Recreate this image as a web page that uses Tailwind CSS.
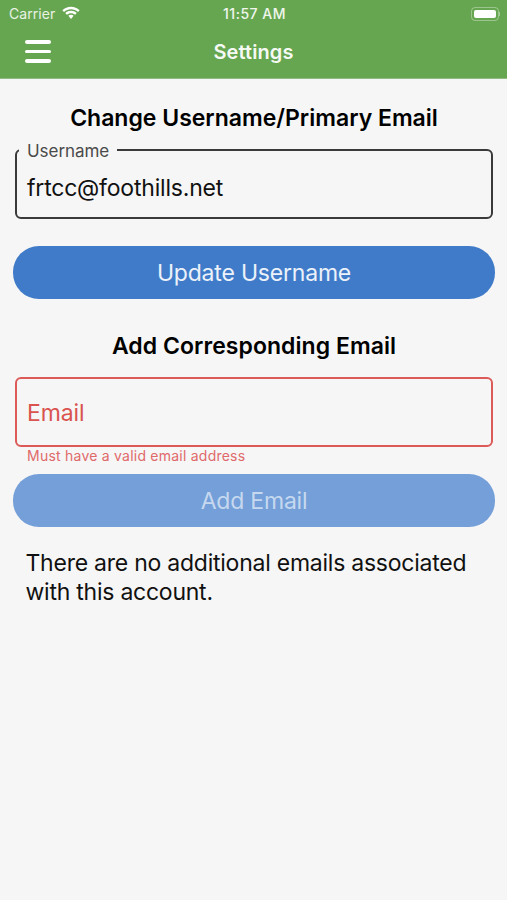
<!DOCTYPE html>
<html>
<head>
<meta charset="utf-8">
<script src="https://cdn.jsdelivr.net/npm/@tailwindcss/browser@4"></script>
</head>
<body class="m-0 bg-[#f6f6f6]">
<div class="w-[507px] h-[900px] overflow-hidden bg-[#f6f6f6] font-['Inter',sans-serif] flex flex-col">
  <header class="h-[79px] bg-[#67a650] text-white shrink-0 border-b border-[#8fbb80]">
    <div class="h-[27px] pl-[9px] pr-[7px] grid grid-cols-3 items-center text-[14px] leading-none">
      <div class="flex items-center gap-[6px] text-white/85">
        <span class="tracking-[0.05px]">Carrier</span>
        <svg class="w-[20px] h-[15px] -mt-[1px]" viewBox="0 0 19 15" fill="#fff"><path d="M9.5 3.2c2.7 0 5.1 1 7 2.8l1.6-1.8C15.800 2 12.800.7 9.500.7S3.200 2 .9 4.200L2.500 6c1.900-1.800 4.300-2.800 7-2.800z"/><path d="M9.500 7.200c1.600 0 3 .6 4.100 1.600l1.600-1.800C13.700 5.600 11.700 4.700 9.500 4.700S5.300 5.600 3.800 7l1.600 1.800c1.100-1 2.500-1.600 4.100-1.600z"/><path d="M9.500 8.800c-1 0-1.900.4-2.600 1l2.600 3.200 2.600-3.200c-.7-.6-1.600-1-2.600-1z"/></svg>
      </div>
      <div class="text-center font-medium text-[14px] text-white/90 tracking-[0.5px]">11:57 AM</div>
      <div class="flex justify-end">
        <div class="flex items-center">
          <div class="w-[28px] h-[14px] rounded-[4px] border border-white/35 p-[2px]"><div class="w-full h-full bg-white rounded-[2px]"></div></div>
          <div class="w-[1px] h-[4px] bg-white/40"></div>
        </div>
      </div>
    </div>
    <div class="relative h-[51px] flex items-center justify-center">
      <div class="absolute left-[25px] top-[13px] w-[26px] flex flex-col gap-[6px]">
        <div class="h-[3.500px] bg-white rounded-full"></div>
        <div class="h-[3.500px] bg-white rounded-full"></div>
        <div class="h-[3.500px] bg-white rounded-full"></div>
      </div>
      <h1 class="text-[20px] font-semibold text-white/95 -mt-[2px] tracking-[0.1px]">Settings</h1>
    </div>
  </header>
  <main class="pl-[13px] pr-[12px] flex flex-col">
    <h2 class="mt-[24px] h-[30px] leading-[30px] text-center text-[23px] font-semibold text-black">Change Username/Primary Email</h2>
    <div class="relative mt-[16px] mx-[2px] h-[70px] rounded-[6px] border-2 border-[#3a3a3a] flex items-center px-[10px] pt-[8px]">
      <span class="absolute left-[2px] -top-[10px] px-[8px] bg-[#f6f6f6] text-[17px] leading-[20px] text-[#4a4a4a] tracking-[-0.05px]">Username</span>
      <span class="text-[23px] text-[#111] tracking-[-0.2px]">frtcc@foothills.net</span>
    </div>
    <button class="mt-[27px] h-[53px] rounded-[26px] bg-[#3f7bc8] text-white/90 text-[23px] tracking-[-0.2px] pt-[1px]">Update Username</button>
    <h2 class="mt-[32px] h-[30px] leading-[30px] text-center text-[23px] font-semibold text-black tracking-[0.05px]">Add Corresponding Email</h2>
    <div class="mt-[16px] mx-[2px] h-[70px] rounded-[6px] border-2 border-[#dc5a58] flex items-center px-[10px] pt-[3px]">
      <span class="text-[23px] text-[#d9534f] tracking-[-0.1px]">Email</span>
    </div>
    <p class="mx-[14px] h-[17px] leading-[17px] text-[14px] tracking-[0.23px] text-[#e0696a]">Must have a valid email address</p>
    <button class="mt-[10px] h-[53px] rounded-[26px] bg-[#749fd8] text-white/60 text-[23px] tracking-[-0.2px] pt-[1px]">Add Email</button>
    <p class="mt-[22px] ml-[12.500px] mr-[12px] text-[23px] leading-[29px] text-[#111] tracking-[-0.24px]">There are no additional emails associated with this account.</p>
  </main>
</div>
</body>
</html>
